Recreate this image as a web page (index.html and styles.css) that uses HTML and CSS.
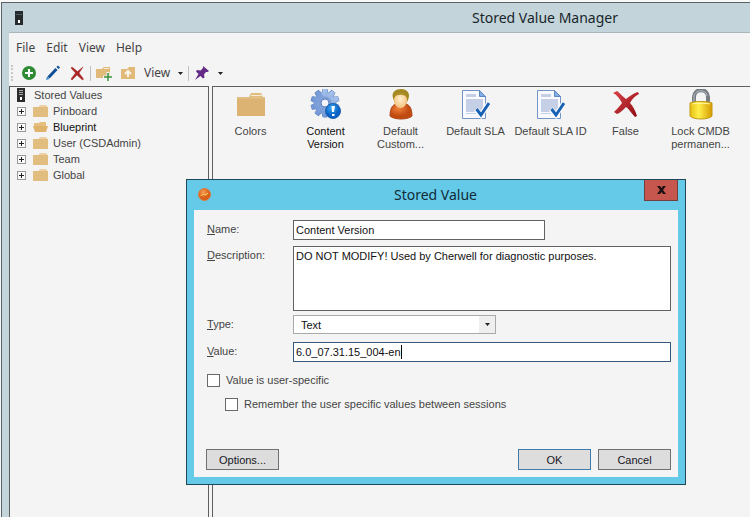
FILE: index.html
```html
<!DOCTYPE html>
<html lang="en">
<head>
<meta charset="utf-8">
<title>Stored Value Manager</title>
<link rel="stylesheet" href="styles.css">
</head>
<body>
<svg class="defs" aria-hidden="true">
  <defs>
    <linearGradient id="gearBlue" gradientUnits="userSpaceOnUse" x1="4" y1="2" x2="26" y2="28"><stop offset="0" stop-color="#b3cdf2"/><stop offset="1" stop-color="#6088cc"/></linearGradient>
    <radialGradient id="badgeBlue" cx=".4" cy=".3"><stop offset="0" stop-color="#3aa5f5"/><stop offset="1" stop-color="#0a61c4"/></radialGradient>
    <radialGradient id="robe" cx=".4" cy=".3"><stop offset="0" stop-color="#f0803a"/><stop offset="1" stop-color="#c04a10"/></radialGradient>
    <radialGradient id="face" cx=".5" cy=".4"><stop offset="0" stop-color="#fff0cf"/><stop offset="1" stop-color="#f6c888"/></radialGradient>
    <linearGradient id="lockGold" x1="0" y1="0" x2="1" y2="0"><stop offset="0" stop-color="#e8bd10"/><stop offset=".4" stop-color="#fff04a"/><stop offset="1" stop-color="#d69a00"/></linearGradient>
    <linearGradient id="crossRed" x1="0" y1="0" x2="1" y2="1"><stop offset="0" stop-color="#d8444a"/><stop offset="1" stop-color="#8d0a10"/></linearGradient>
    <radialGradient id="orangeBall" cx=".4" cy=".3"><stop offset="0" stop-color="#f79b50"/><stop offset="1" stop-color="#d75f17"/></radialGradient>
    <symbol id="folder" viewBox="0 0 15 12"><path d="M0 2h6l1-2h6l1 2h1v10H0z" fill="#e1bd80"/><path d="M7 1h6" stroke="#f5e5c9"/></symbol>
    <symbol id="folder-open" viewBox="0 0 15 12"><path d="M1 2h5l1-1h6v4H1z" fill="#e6bf80"/><path d="M0 5h15l-2 6H2z" fill="#dfb36b"/></symbol>
    <symbol id="server" viewBox="0 0 8 14"><path d="M0 0h8v14H0z" fill="#2b2b2b"/><path d="M2 2.500h4M2 4.500h4M2 6.500h4" stroke="#aaa"/><path d="M3 9h2v3H3z" fill="#fff"/></symbol>
    <symbol id="document" viewBox="0 0 28 31"><path d="M.5 1.500h17l6 6v22H.5z" fill="#f8faff" stroke="#7295c5"/><path d="M17.500 1.500v6h6z" fill="#80aeea" stroke="#5c86bd"/><path d="M4 5h10v3H4zM4 10h17v13H4z" fill="#c5cfe5"/><path d="M4 24.500h10" stroke="#c5cfe5"/><path d="M14 20l5 6 8-12" fill="none" stroke="#fff" stroke-width="5"/><path d="M14.500 20l4.500 6 8-12" fill="none" stroke="#1762b5" stroke-width="3"/></symbol>
    <symbol id="arrow" viewBox="0 0 5 3"><path d="M0 0h5L2.500 3z" fill="currentColor"/></symbol>
    <g id="gear-shape">
      <circle cx="15" cy="14" r="10.500"/>
      <path id="teeth" d="M13 0h4l1 5v18l-1 5h-4l-1-5V5z"/>
      <use href="#teeth" transform="rotate(36 15 14)"/>
      <use href="#teeth" transform="rotate(72 15 14)"/>
      <use href="#teeth" transform="rotate(108 15 14)"/>
      <use href="#teeth" transform="rotate(144 15 14)"/>
    </g>
  </defs>
</svg>

<div class="window">
  <header class="titlebar">
    <svg class="app-icon" viewBox="0 0 8 14"><path d="M0 0h8v14H0z" fill="#252b2d"/><path d="M1 3.500h6" stroke="#505b60"/><path d="M3 9h2v3H3z" fill="#fff"/></svg>
    <h1 class="window-title">Stored Value Manager</h1>
  </header>

  <div class="client">
    <nav class="menubar">
      <button>File</button><button>Edit</button><button>View</button><button>Help</button>
    </nav>

    <div class="toolbar">
      <span class="grip"></span>
      <button aria-label="New"><svg width="16" height="16" viewBox="0 0 16 16"><circle cx="8" cy="8" r="7" fill="#2f8c35"/><path d="M8 4v8M4 8h8" stroke="#fff" stroke-width="2"/></svg></button>
      <button aria-label="Edit"><svg width="16" height="16" viewBox="0 0 16 16"><path d="M3.500 12.500l8-8.500" stroke="#0f4f98" stroke-width="3"/><path d="M12.500 3l1.500-1.500" stroke="#0f4f98" stroke-width="3"/><path d="M1 15l1-3.500 2.500 2.500z" fill="#3d87c8"/></svg></button>
      <button aria-label="Delete"><svg width="16" height="16" viewBox="0 0 16 16"><path d="M2 3l1-1 5.500 4.500L14 2 10 8l4.500 6-1 1-5.500-5L3 15l-1-1 4.500-6z" fill="#a82625" stroke="#a82625" stroke-width=".5"/></svg></button>
      <span class="separator"></span>
      <button aria-label="New folder"><svg width="16" height="16" viewBox="0 0 16 16"><path d="M0 4h6l2-2h6v11H0z" fill="#e1ba7a"/><path d="M8 3.500h5" stroke="#f7ebd6"/><path d="M12 7v9M7 12h9" stroke="#f4f4f4" stroke-width="3"/><path d="M12 8v8M8 12h8" stroke="#37923b" stroke-width="1.500"/></svg></button>
      <button aria-label="Up one folder"><svg width="16" height="16" viewBox="0 0 16 16"><path d="M1 4h6l2-2h6v12H1z" fill="#e1ba7a"/><path d="M8 12V6M5 9l3-3 3 3" fill="none" stroke="#fbf3e5" stroke-width="2"/></svg></button>
      <button class="drop">View <svg class="arrow"><use href="#arrow"/></svg></button>
      <span class="separator"></span>
      <button class="drop" aria-label="Pin"><svg width="16" height="16" viewBox="0 0 16 16"><path d="M9 1l6 5-1.500 1h-1.500l-2 2.500.5 3-1.500 1-2.500-2.500L1 15l3.500-6L2 6.500 3 5l3.500.5L9 3z" fill="#642b86"/></svg> <svg class="arrow"><use href="#arrow"/></svg></button>
    </div>

    <main class="panes">
      <aside class="tree">
        <div class="root"><svg width="8" height="14"><use href="#server"/></svg>Stored Values</div>
        <ul>
          <li><button class="expander" aria-label="Expand Pinboard"></button><svg width="15" height="12"><use href="#folder"/></svg>Pinboard</li>
          <li class="current"><button class="expander" aria-label="Expand Blueprint"></button><svg width="15" height="12"><use href="#folder-open"/></svg>Blueprint</li>
          <li><button class="expander" aria-label="Expand User"></button><svg width="15" height="12"><use href="#folder"/></svg>User (CSDAdmin)</li>
          <li><button class="expander" aria-label="Expand Team"></button><svg width="15" height="12"><use href="#folder"/></svg>Team</li>
          <li><button class="expander" aria-label="Expand Global"></button><svg width="15" height="12"><use href="#folder"/></svg>Global</li>
        </ul>
      </aside>

      <section class="items">
        <figure><svg width="28" height="31" viewBox="0 0 28 31"><path d="M0 9h28v18H0z" fill="#dcb373"/><path d="M0 8h12l2-4h10l2 4h2v2H0z" fill="#e2bd81"/><path d="M14 6.500h11" stroke="#f7ead5"/></svg><figcaption>Colors</figcaption></figure>
        <figure class="current"><svg width="32" height="31" viewBox="0 0 32 31"><use href="#gear-shape" fill="#6487c2" stroke="#6487c2"/><use href="#gear-shape" fill="url(#gearBlue)"/><circle cx="15" cy="14" r="6.500" fill="#7f9fd6"/><circle cx="15" cy="14" r="4" fill="#f4f6fb" stroke="#5f83bd"/><circle cx="23" cy="22" r="7.500" fill="url(#badgeBlue)" stroke="#1d61af"/><path d="M21.500 17h3.500l-1 6h-2zM22 25h2.500v2H22z" fill="#fff"/></svg><figcaption>Content<br>Version</figcaption></figure>
        <figure><svg width="24" height="31" viewBox="0 0 24 31"><path d="M1 27c0-8 3-12 7-12h8c4 0 7 4 7 12-4 4-18 4-22 0z" fill="url(#robe)" stroke="#ae4514"/><path d="M4 9C2 3 7 0 12 0c6 0 10 4 7 11l-2 4H6z" fill="#a48821"/><ellipse cx="11.500" cy="11.500" rx="6.500" ry="7.500" fill="url(#face)"/><path d="M5 8c1-5 9-6 13 0-4-3-9-3-13 0z" fill="#ad8f25"/></svg><figcaption>Default<br>Custom...</figcaption></figure>
        <figure><svg width="28" height="31"><use href="#document"/></svg><figcaption>Default SLA</figcaption></figure>
        <figure><svg width="28" height="31"><use href="#document"/></svg><figcaption>Default SLA ID</figcaption></figure>
        <figure><svg width="28" height="31" viewBox="0 0 28 31"><path d="M1 4l4-2c4 3 6 6 9 8 4-3 8-6 12-7l1 2c-4 2-7 5-9 9 3 3 5 7 7 13l-2 1c-4-4-6-8-9-10-3 3-6 6-9 7l-3-2c3-3 6-6 8-9-2-4-5-8-9-10z" fill="url(#crossRed)"/></svg><figcaption>False</figcaption></figure>
        <figure><svg width="24" height="31" viewBox="0 0 24 31"><path d="M5 16V8c0-9 14-9 14 0v8" fill="none" stroke="#777d83" stroke-width="4"/><path d="M5 15V8c0-8 13-8 13-1" fill="none" stroke="#b7bec4"/><path d="M1 14c3-2 19-2 22 0v13c-3 4-19 4-22 0z" fill="url(#lockGold)" stroke="#c29a16"/><path d="M3 15c4-1 14-1 18 0" stroke="#fff9a8" fill="none"/></svg><figcaption>Lock CMDB<br>permanen...</figcaption></figure>
      </section>
    </main>
  </div>
</div>

<div class="dialog" role="dialog" aria-labelledby="dialog-title">
  <header class="dialog-bar">
    <svg width="13" height="13" viewBox="0 0 13 13"><circle cx="6.500" cy="6.500" r="6" fill="url(#orangeBall)" stroke="#dc7b3b"/><path d="M3 8c2-4 4 1 7-3" fill="none" stroke="#ffd268"/></svg>
    <h2 id="dialog-title">Stored Value</h2>
    <button class="close" aria-label="Close"><svg width="9" height="8" viewBox="0 0 9 8"><path d="M0 0h3l1.500 2L6 0h3L6 4l3 4H6L4.500 6 3 8H0l3-4z" fill="#1d1010"/></svg></button>
  </header>
  <form class="dialog-body">
    <div class="fields">
      <label for="name"><u>N</u>ame:</label>
      <input class="box name" id="name" type="text" value="Content Version">
      <label for="description"><u>D</u>escription:</label>
      <textarea class="box" id="description">DO NOT MODIFY! Used by Cherwell for diagnostic purposes.</textarea>
      <label for="type"><u>T</u>ype:</label>
      <div class="picker">
        <select id="type"><option>Text</option></select>
        <span class="picker-button"><svg class="arrow"><use href="#arrow"/></svg></span>
      </div>
      <label for="value"><u>V</u>alue:</label>
      <div class="entry"><input class="box" id="value" type="text" value="6.0_07.31.15_004-en"><span class="caret"></span></div>
    </div>
    <label class="check"><input type="checkbox">Value is user-specific</label>
    <label class="check nested"><input type="checkbox">Remember the user specific values between sessions</label>
    <div class="actions">
      <button type="button">Options...</button>
      <button type="button" class="primary">OK</button>
      <button type="button">Cancel</button>
    </div>
  </form>
</div>
</body>
</html>
```
FILE: styles.css
```css
* { box-sizing: border-box; }

body {
  margin: 0;
  min-height: 100vh;
  display: flex;
  position: relative;
  overflow: hidden;
  background: #f8f8f8;
  color: #444;
  font: 11px/16px "Liberation Sans", Arial, sans-serif;
}

button, input, select, textarea { font: inherit; color: inherit; }
button { border: 0; padding: 0; background: none; }
h1, h2, ul, figure { margin: 0; padding: 0; }
svg { display: block; flex: none; }
.defs { position: absolute; width: 0; height: 0; }
.arrow { width: 5px; height: 3px; color: #222; }

.window {
  flex: 1;
  display: flex;
  flex-direction: column;
  margin: 2px 0 0 1px;
  padding-left: 7px;
  border: solid #59636a;
  border-width: 1px 0 0 1px;
  background: #c3d4da;
}

.titlebar {
  height: 30px;
  display: flex;
  align-items: center;
  padding-left: 6px;
  border-bottom: 1px solid #aab6ba;
}
.app-icon { width: 8px; height: 14px; }
.window-title {
  flex: 1;
  padding-left: 317px;
  text-align: center;
  font: 14px/20px "Noto Sans", sans-serif;
  color: #18262b;
}

.client {
  flex: 1;
  display: flex;
  flex-direction: column;
  background: #f4f4f4;
}

.menubar {
  display: flex;
  gap: 11px;
  padding: 6px 7px 4px;
  font: 12px/18px "Noto Sans", sans-serif;
}

.toolbar {
  height: 25px;
  display: flex;
  align-items: center;
  gap: 8px;
  padding: 0 0 1px 2px;
  font: 12px/18px "Noto Sans", sans-serif;
}
.grip { height: 16px; border-left: 2px dotted #c8c8c8; }
.separator { width: 1px; height: 15px; margin: 0 -3px; background: #c5bfc0; }
.drop { display: flex; align-items: center; gap: 8px; }

.panes {
  flex: 1;
  display: grid;
  grid-template-columns: 200px 1fr;
  gap: 3px;
}
.tree, .items { border: solid #5e5e5e; border-width: 1px 0 0 1px; }
.tree { border-right-width: 1px; padding-left: 7px; }
.root, .tree li { display: flex; align-items: center; height: 16px; }
.root { gap: 9px; }
.tree ul { list-style: none; }
.tree li svg { margin: 0 5px 0 7px; }
.tree .current, .items .current { color: #111; }
.expander {
  width: 9px;
  height: 9px;
  border: 1px solid #999;
  background:
    linear-gradient(#222, #222) center / 5px 1px no-repeat,
    linear-gradient(#222, #222) center / 1px 5px no-repeat,
    #fafafa;
}

.items {
  display: grid;
  grid-template-columns: repeat(auto-fill, 75px);
  align-content: start;
  padding: 2px 0 0;
  line-height: 13px;
  text-align: center;
}
.items figure {
  display: flex;
  flex-direction: column;
  align-items: center;
  gap: 5px;
  white-space: nowrap;
}

.dialog {
  position: absolute;
  left: 186px;
  top: 179px;
  width: 500px;
  padding: 0 7px 7px;
  border: 1px solid #1d4858;
  background: #65cae8;
}
.dialog-bar {
  height: 30px;
  display: flex;
  align-items: flex-start;
}
.dialog-bar > svg { margin: 8px 0 0 4px; }
.dialog-bar h2 {
  flex: 1;
  padding: 5px 0 0 16px;
  text-align: center;
  font: 14px/20px "Noto Sans", sans-serif;
  color: #102c38;
}
.close {
  width: 34px;
  height: 21px;
  display: grid;
  place-items: center;
  border: 1px solid #713f3d;
  border-top: 0;
  background: #c6574f;
}
.dialog-body { padding: 10px 7px 7px 12px; background: #f4f4f4; }
.fields {
  display: grid;
  grid-template-columns: 86px 1fr;
  grid-template-rows: 24px 67px 25px 20px;
  row-gap: 2px;
  align-items: start;
  padding-left: 1px;
}
.fields > label { padding-top: 1px; }
.box {
  display: block;
  width: 100%;
  height: 20px;
  margin: 0;
  padding: 0 2px;
  border: 1px solid #626262;
  border-radius: 0;
  background: #fff;
  color: #111;
}
.name { width: 252px; }
textarea.box { height: 65px; padding-top: 1px; resize: none; }

.picker { position: relative; width: 203px; height: 19px; }
.picker select {
  appearance: none;
  width: 100%;
  height: 100%;
  padding: 0 7px;
  border: 1px solid #aaa;
  border-radius: 0;
  background: #fff;
  color: #111;
}
.picker-button {
  position: absolute;
  inset: 1px 1px 1px auto;
  width: 16px;
  display: grid;
  place-items: center;
  background: #efefef;
  pointer-events: none;
}
.entry { position: relative; }
.entry .box { border-color: #37597b; }
.caret {
  position: absolute;
  left: 108px;
  top: 3px;
  width: 1px;
  height: 14px;
  background: #000;
}

.check {
  display: flex;
  align-items: center;
  gap: 6px;
  height: 16px;
  margin: 10px 0 0 1px;
}
.check.nested { margin: 8px 0 0 19px; }
.check input {
  appearance: none;
  width: 13px;
  height: 13px;
  margin: 0;
  border: 1px solid #6a6a6a;
  background: #fff;
}

.actions { display: flex; gap: 7px; margin-top: 37px; }
.actions button {
  width: 73px;
  height: 21px;
  border: 1px solid #707070;
  background: #ddd;
  color: #16161e;
}
.actions .primary { margin-left: auto; border-color: #4278aa; }
```
